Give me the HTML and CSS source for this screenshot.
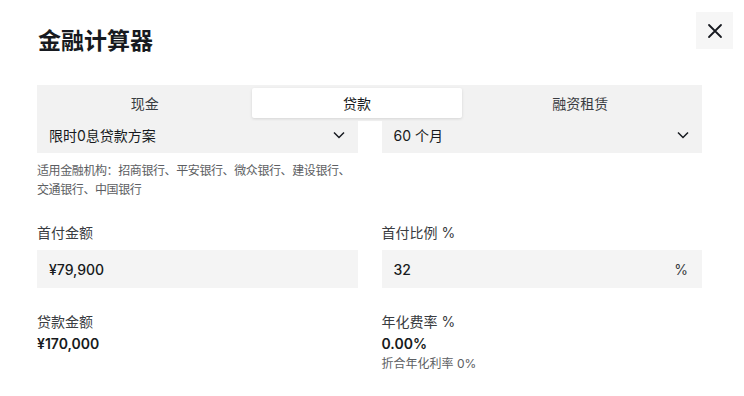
FILE: index.html
```html
<!DOCTYPE html>
<html lang="zh-CN">

<head>
    <meta charset="UTF-8">
    <meta name="viewport" content="width=device-width, initial-scale=1.0">
    <title>金融计算器</title>
    <link rel="stylesheet" href="styles.css">
</head>

<body>

    <div class="page">
        <div class="header">
            <h1>金融计算器</h1>
            <button class="close-btn" aria-label="关闭">
                <svg width="16" height="16" viewBox="0 0 16 16">
                    <path d="M2 2 L14 14 M14 2 L2 14" stroke="#171a20" stroke-width="1.8" fill="none" stroke-linecap="round" />
                </svg>
            </button>
        </div>

        <div class="tabs">
            <div class="tab">现金</div>
            <div class="tab active">贷款</div>
            <div class="tab">融资租赁</div>
        </div>

        <div class="grid">
            <div class="field">
                <div class="select">
                    <span>限时0息贷款方案</span>
                    <svg class="chevron" width="12" height="8" viewBox="0 0 12 8">
                        <path d="M1 1.5 L6 6.5 L11 1.5" stroke="#171a20" stroke-width="1.5" fill="none" />
                    </svg>
                </div>
                <p class="note">适用金融机构：招商银行、平安银行、微众银行、建设银行、交通银行、中国银行</p>
            </div>
            <div class="field">
                <div class="select">
                    <span>60 个月</span>
                    <svg class="chevron" width="12" height="8" viewBox="0 0 12 8">
                        <path d="M1 1.5 L6 6.5 L11 1.5" stroke="#171a20" stroke-width="1.5" fill="none" />
                    </svg>
                </div>
            </div>

            <div class="field">
                <label class="label">首付金额</label>
                <div class="input">
                    <span>¥79,900</span>
                </div>
            </div>
            <div class="field">
                <label class="label">首付比例 %</label>
                <div class="input">
                    <span>32</span>
                    <span class="unit">%</span>
                </div>
            </div>

            <div class="field">
                <div class="label">贷款金额</div>
                <div class="value">¥170,000</div>
            </div>
            <div class="field">
                <div class="label">年化费率 %</div>
                <div class="value">0.00%</div>
                <div class="sub">折合年化利率 0%</div>
            </div>
        </div>
    </div>

</body>

</html>
```

FILE: styles.css
```css
body {
    margin: 0;
    font-family: Inter, "Noto Sans CJK SC", sans-serif;
    color: #171a20;
    background: #fff;
}

.page {
    padding: 0 42px 0 37px;
}

.header {
    display: flex;
    justify-content: space-between;
    align-items: flex-start;
    padding-top: 12px;
    margin-right: -31px;
}

.header h1 {
    margin: 17px 0 0 1px;
    font-size: 23px;
    line-height: 24px;
    font-weight: 700;
}

.close-btn {
    width: 37px;
    height: 37px;
    border: none;
    padding: 0;
    background: #f6f6f6;
    display: flex;
    align-items: center;
    justify-content: center;
}

.tabs {
    margin-top: 32px;
    display: flex;
    padding: 3px;
    height: 30px;
    background: #f2f2f2;
}

.tab {
    flex: 1 1 auto;
    text-align: center;
    font-size: 14px;
    line-height: 31px;
    color: #393c41;
}

.tab.active {
    margin-left: 3px;
    background: #fff;
    color: #171a20;
    border-radius: 2px;
    box-shadow: 0 1px 3px rgba(0, 0, 0, 0.12);
}

.grid {
    display: grid;
    grid-template-columns: 1fr 1fr;
    column-gap: 24px;
    row-gap: 24px;
}

.select {
    height: 32px;
    box-sizing: border-box;
    background: #f2f2f2;
    padding: 0 13px 5px 12px;
    display: flex;
    align-items: center;
    justify-content: space-between;
    font-size: 14px;
}

.note {
    margin: 8px 0 0;
    font-size: 12px;
    line-height: 19px;
    letter-spacing: -0.4px;
    color: #5c5e62;
}

.label {
    display: block;
    font-size: 14px;
    line-height: 20px;
    color: #393c41;
}

.input {
    margin-top: 7px;
    height: 38px;
    background: #f4f4f4;
    padding: 0 14px 0 12px;
    display: flex;
    align-items: center;
    justify-content: space-between;
    font-size: 14px;
    font-weight: 500;
}

.unit {
    color: #393c41;
    font-weight: 400;
}

.value {
    margin-top: 2px;
    font-size: 14px;
    line-height: 20px;
    font-weight: 600;
}

.sub {
    margin-top: 1px;
    font-size: 12px;
    line-height: 18px;
    color: #5c5e62;
}
```
